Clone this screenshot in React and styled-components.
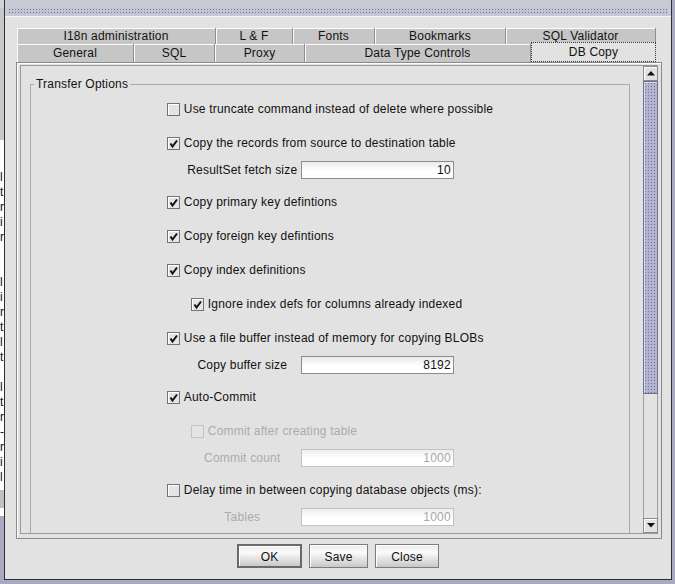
import React from "react";
import styled, { createGlobalStyle, css } from "styled-components";

const GlobalStyle = createGlobalStyle`
  html, body { margin: 0; padding: 0; }
  body {
    background: #a9aac2;
    font-family: "Liberation Sans", Arial, sans-serif;
    font-size: 12px;
  }
`;

const bumps = css`
  background-color: #c3c4d6;
  background-image: radial-gradient(circle, #6f7190 0.7px, transparent 0.9px);
  background-size: 3px 3px;
`;

const Screen = styled.div`
  width: 675px;
  height: 584px;
  display: flex;
  overflow: hidden;
  background: #a9aac2;
`;

// the window behind the dialog, only its right edge shows
const Peek = styled.div`
  width: 4px;
  flex-shrink: 0;
  display: flex;
  flex-direction: column;
  overflow: hidden;
`;

const PeekBlock = styled.div`
  height: ${(p) => p.$h}px;
  flex-shrink: 0;
  background: ${(p) => p.$bg};
  padding-top: ${(p) => p.$pad || 0}px;
  box-sizing: border-box;
`;

const PeekLine = styled.div`
  height: 15px;
  line-height: 15px;
  white-space: nowrap;
  color: #111;
`;

const Dialog = styled.div`
  width: 668px;
  height: 580px;
  flex-shrink: 0;
  box-sizing: border-box;
  border: 1px solid #2e2f36;
  border-top: none;
  background: #e2e2e2;
  display: flex;
  flex-direction: column;
`;

const TitleBar = styled.div`
  height: 17px;
  box-sizing: border-box;
  padding: 8px 3px 1px 3px;
  background: #c9cad6;
  border-bottom: 1px solid #f4f4f4;
`;

const Bumps = styled.div`
  height: 100%;
  ${bumps}
`;

const Body = styled.div`
  flex: 1;
  display: flex;
  flex-direction: column;
  padding: 11px 9px 0 11px;
`;

const TabStrip = styled.div`
  display: flex;
  flex-direction: column;
  padding-left: 1px;
`;

const TabRow = styled.div`
  display: flex;
  height: ${(p) => p.$h}px;
`;

const Tab = styled.div`
  width: ${(p) => p.$w}px;
  height: 100%;
  box-sizing: border-box;
  display: flex;
  align-items: center;
  justify-content: center;
  background: #c6c6c6;
  color: #111;
  letter-spacing: 0.2px;
  border-right: 1px solid #8e8e8e;
  box-shadow: inset 1px 1px 0 #fbfbfb;
  ${(p) =>
    p.$active &&
    css`
      position: relative;
      height: calc(100% + 2px);
      margin-top: -2px;
      background: #e2e2e2;
      border: 1px dotted #3a3a3a;
      box-shadow: none;
    `}
`;

const Panel = styled.div`
  height: 477px;
  box-sizing: border-box;
  border: 1px solid #8a8a8a;
  box-shadow: inset 1px 1px 0 #fff;
  padding: 2px 3px 4px 3px;
  display: flex;
`;

const ScrollPane = styled.div`
  flex: 1;
  display: flex;
  border: 1px solid #9a9a9a;
  border-right: none;
`;

const Viewport = styled.div`
  flex: 1;
  overflow: hidden;
  padding: 11px 13px 0 9px;
`;

const ScrollBar = styled.div`
  width: 15px;
  display: flex;
  flex-direction: column;
`;

const ScrollButton = styled.div`
  height: 15px;
  box-sizing: border-box;
  border: 1px solid #8a8a8a;
  box-shadow: inset 1px 1px 0 #fff;
  background: #e2e2e2;
  display: flex;
  align-items: center;
  justify-content: center;
`;

const Thumb = styled.div`
  height: 313px;
  box-sizing: border-box;
  border: 1px solid #6e7090;
  box-shadow: inset 1px 1px 0 #dcdcf0;
  ${bumps}
  background-color: #b3b4d0;
`;

const Track = styled.div`
  flex: 1;
  border-left: 1px solid #a0a0a0;
  border-right: 1px solid #a0a0a0;
  background: #e2e2e2;
`;

const Group = styled.fieldset`
  margin: 0;
  min-width: 0;
  padding: 6px 0 0 0;
  border: 1px solid #ababab;
`;

const Legend = styled.legend`
  padding: 0 2px;
  margin-left: 3px;
  line-height: 14px;
  color: #111;
  letter-spacing: 0.2px;
`;

const OptionList = styled.div`
  width: max-content;
  margin: 0 auto;
  display: flex;
  flex-direction: column;
  align-items: flex-start;
  padding-bottom: 60px;
`;

const CheckRow = styled.div`
  height: 24px;
  display: flex;
  align-items: center;
  gap: 4px;
  margin-top: ${(p) => (p.$first ? 0 : 10)}px;
  padding-left: ${(p) => (p.$indent ? 24 : 0)}px;
  color: ${(p) => (p.$disabled ? "#ababab" : "#111")};
  letter-spacing: 0.2px;
`;

const Box = styled.span`
  width: 13px;
  height: 13px;
  box-sizing: border-box;
  border: 1px solid ${(p) => (p.$disabled ? "#c3c3c3" : "#737373")};
  box-shadow: ${(p) => (p.$disabled ? "none" : "inset 1px 1px 0 #fff")};
  background: #e4e4e4;
  display: flex;
  align-items: center;
  justify-content: center;
`;

const FieldRow = styled.div`
  height: 20px;
  margin-top: 5px;
  padding-left: 17px;
  display: grid;
  grid-template-columns: 117px 153px;
  align-items: center;
  color: ${(p) => (p.$disabled ? "#ababab" : "#111")};
  letter-spacing: 0.2px;
`;

const FieldLabel = styled.span`
  text-align: center;
`;

const Field = styled.input`
  height: 18px;
  width: 153px;
  box-sizing: border-box;
  margin: 0;
  padding: 0 2px 0 0;
  border: 1px solid ${(p) => (p.disabled ? "#c2c2c2" : "#8c8c8c")};
  outline: none;
  background: linear-gradient(to bottom, #eaeaea, #ffffff 55%);
  font: inherit;
  letter-spacing: 0.2px;
  text-align: right;
  color: #111;
  &:disabled {
    color: #a8a8a8;
    -webkit-text-fill-color: #a8a8a8;
    background: linear-gradient(to bottom, #eeeeee, #ffffff 55%);
  }
`;

const ButtonBar = styled.div`
  display: flex;
  justify-content: center;
  gap: 7px;
  margin-top: 5px;
  padding-right: 2px;
`;

const Button = styled.button`
  width: ${(p) => p.$w}px;
  height: 24px;
  box-sizing: border-box;
  margin: 0;
  padding: 1px 0 0 0;
  font: inherit;
  letter-spacing: 0.2px;
  color: #111;
  border: ${(p) => (p.$default ? "2px solid #6a6a6a" : "1px solid #7c7c7c")};
  box-shadow: inset 1px 1px 0 #fff;
  background: linear-gradient(to bottom, #ececec 0%, #fafafa 35%, #e6e6e6 60%, #c8c8c8 100%);
`;

function Check({ checked }) {
  return (
    <svg width="11" height="11" viewBox="0 0 11 11">
      {checked && (
        <polyline points="2.5,5.5 4.5,8.5 9,2.5" fill="none" stroke="#111" strokeWidth="2" />
      )}
    </svg>
  );
}

function Arrow({ down }) {
  return (
    <svg width="8" height="5" viewBox="0 0 8 5">
      <polygon points={down ? "0,0 8,0 4,4.5" : "0,4.5 8,4.5 4,0"} fill="#111" />
    </svg>
  );
}

function Option({ label, checked, indent, disabled, first }) {
  return (
    <CheckRow $indent={indent} $disabled={disabled} $first={first}>
      <Box $disabled={disabled}>
        <Check checked={checked} />
      </Box>
      {label}
    </CheckRow>
  );
}

function Setting({ label, value, disabled }) {
  return (
    <FieldRow $disabled={disabled}>
      <FieldLabel>{label}</FieldLabel>
      <Field readOnly value={value} disabled={disabled} />
    </FieldRow>
  );
}

const backTabs = [
  ["I18n administration", 199],
  ["L & F", 77],
  ["Fonts", 82],
  ["Bookmarks", 131],
  ["SQL Validator", 150],
];

const frontTabs = [
  ["General", 117],
  ["SQL", 81],
  ["Proxy", 90],
  ["Data Type Controls", 226],
  ["DB Copy", 125],
];

const peekLines = ["l", "t", "r", "i", "r", "", "", "l", "i", "r", "t", "l", "t", "", "l", "t", "r", "-", "r", "i", "l"];

export default function App() {
  return (
    <>
      <GlobalStyle />
      <Screen>
        <Peek>
          <PeekBlock $h={8} $bg="#d4d4d8" />
          <PeekBlock $h={132} $bg="#c8c8c8" />
          <PeekBlock $h={350} $bg="#ffffff" $pad={30}>
            {peekLines.map((l, i) => (
              <PeekLine key={i}>{l}</PeekLine>
            ))}
          </PeekBlock>
          <PeekBlock $h={18} $bg="#c0c0c0" />
          <PeekBlock $h={8} $bg="#ffffff" />
        </Peek>
        <Dialog>
          <TitleBar>
            <Bumps />
          </TitleBar>
          <Body>
            <TabStrip>
              <TabRow $h={16}>
                {backTabs.map(([t, w]) => (
                  <Tab key={t} $w={w}>{t}</Tab>
                ))}
              </TabRow>
              <TabRow $h={18}>
                {frontTabs.map(([t, w]) => (
                  <Tab key={t} $w={w} $active={t === "DB Copy"}>{t}</Tab>
                ))}
              </TabRow>
            </TabStrip>
            <Panel>
              <ScrollPane>
                <Viewport>
                  <Group>
                    <Legend>Transfer Options</Legend>
                    <OptionList>
                      <Option first label="Use truncate command instead of delete where possible" />
                      <Option checked label="Copy the records from source to destination table" />
                      <Setting label="ResultSet fetch size" value="10" />
                      <Option checked label="Copy primary key defintions" />
                      <Option checked label="Copy foreign key defintions" />
                      <Option checked label="Copy index definitions" />
                      <Option checked indent label="Ignore index defs for columns already indexed" />
                      <Option checked label="Use a file buffer instead of memory for copying BLOBs" />
                      <Setting label="Copy buffer size" value="8192" />
                      <Option checked label="Auto-Commit" />
                      <Option indent disabled label="Commit after creating table" />
                      <Setting disabled label="Commit count" value="1000" />
                      <Option label="Delay time in between copying database objects (ms):" />
                      <Setting disabled label="Tables" value="1000" />
                      <Setting disabled label="" value="" />
                    </OptionList>
                  </Group>
                </Viewport>
                <ScrollBar>
                  <ScrollButton>
                    <Arrow />
                  </ScrollButton>
                  <Thumb />
                  <Track />
                  <ScrollButton>
                    <Arrow down />
                  </ScrollButton>
                </ScrollBar>
              </ScrollPane>
            </Panel>
            <ButtonBar>
              <Button $w={65} $default>OK</Button>
              <Button $w={59}>Save</Button>
              <Button $w={64}>Close</Button>
            </ButtonBar>
          </Body>
        </Dialog>
      </Screen>
    </>
  );
}
